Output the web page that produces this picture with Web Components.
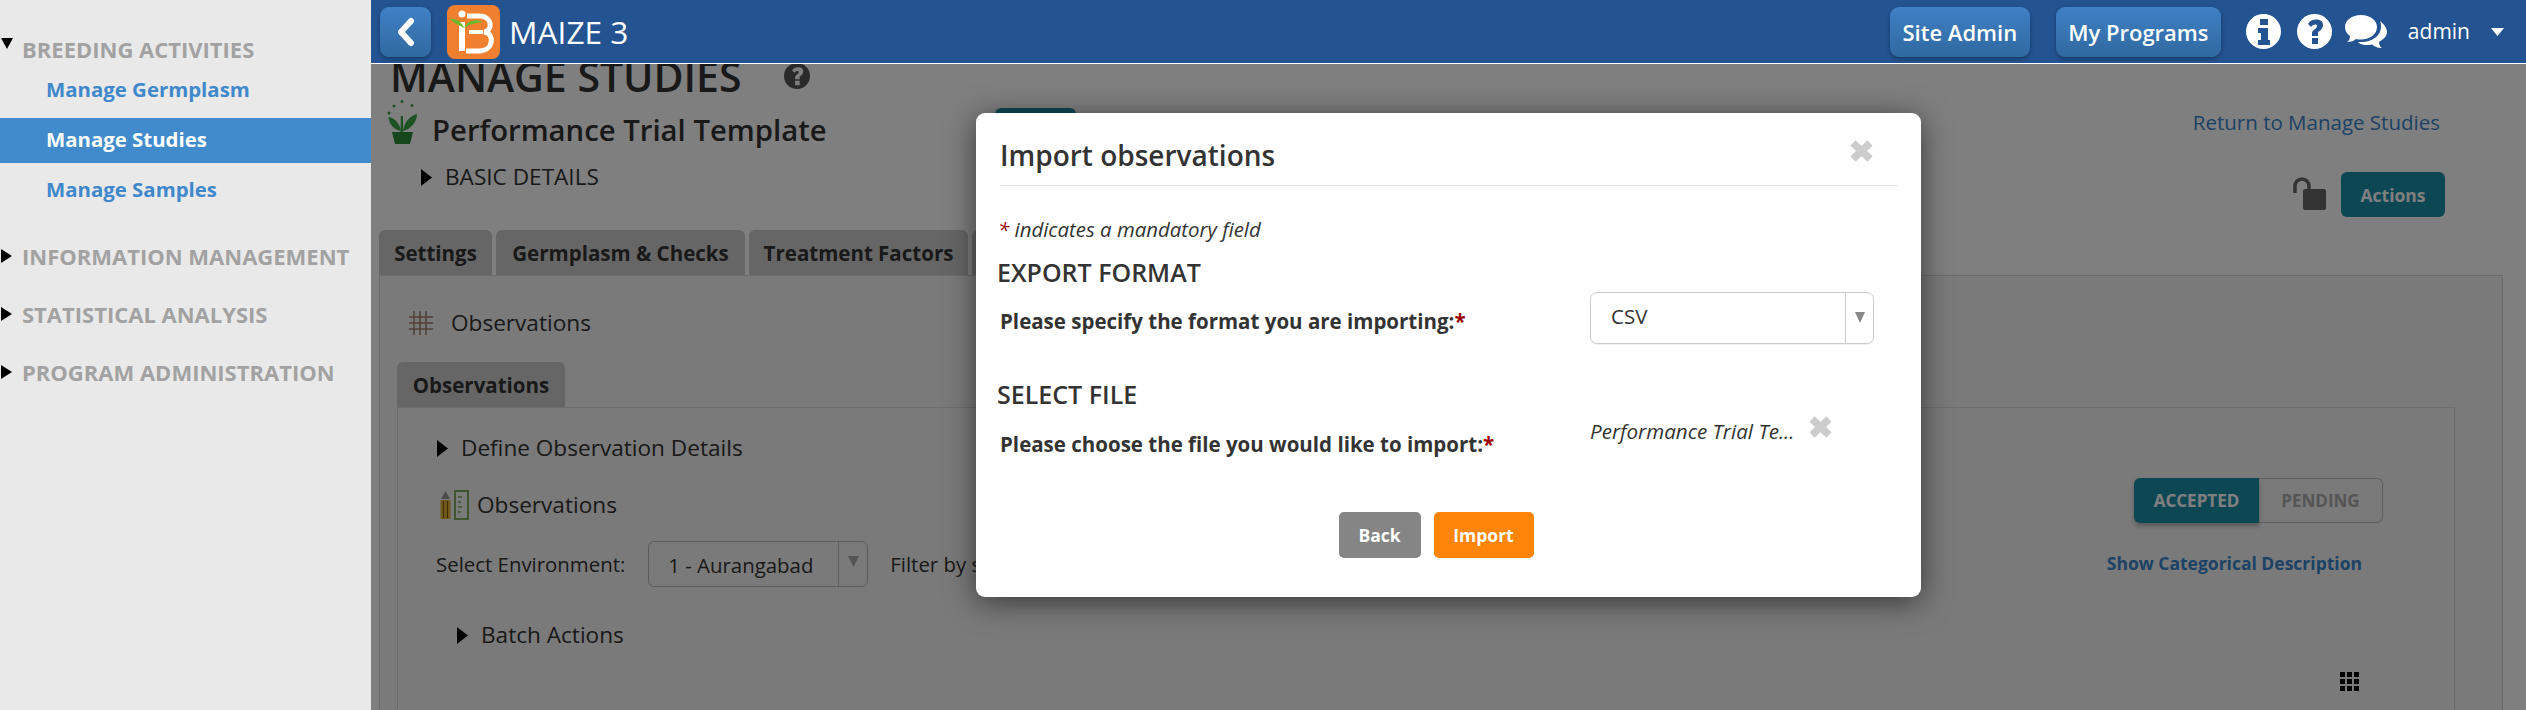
<!DOCTYPE html>
<html>
<head>
<meta charset="utf-8">
<title>Manage Studies</title>
<style>
  html, body { margin: 0; height: 100%; overflow: hidden; }
  body { font-family: "Open Sans", "Liberation Sans", sans-serif; color: #333; }
</style>
</head>
<body>
<app-shell>
  <side-nav slot="nav"></side-nav>
  <top-bar slot="top"></top-bar>
  <study-view slot="main">
    <import-dialog slot="dialog"></import-dialog>
  </study-view>
</app-shell>

<script>
class AppShell extends HTMLElement {
  constructor() {
    super();
    this.attachShadow({ mode: 'open' }).innerHTML = `
      <style>
        :host { display: grid; grid-template-columns: 371px 1fr; grid-template-rows: 64px 646px; width: 2526px; height: 710px; overflow: hidden; }
        .nav { grid-row: 1 / 3; display: block; }
      </style>
      <div class="nav"><slot name="nav"></slot></div>
      <slot name="top"></slot>
      <slot name="main"></slot>
    `;
  }
}

class DisclosureRow extends HTMLElement {
  // small black triangle + label, used all over the page
  constructor() {
    super();
    this.attachShadow({ mode: 'open' }).innerHTML = `
      <style>
        :host { display: flex; align-items: center; gap: 12px; font-size: 22.6px; color: #333; line-height: 28px; }
        svg { width: 13px; height: 19px; flex: none; fill: #000; }
      </style>
      <svg viewBox="0 0 13 19"><path d="M1 1 L12 9.5 L1 18 Z"/></svg>
      <slot></slot>
    `;
  }
}

class NavGroup extends HTMLElement {
  constructor() {
    super();
    const open = this.hasAttribute('open');
    this.attachShadow({ mode: 'open' }).innerHTML = `
      <style>
        :host { display: block; margin-bottom: 28px; }
        .head { display: flex; align-items: center; height: 30px; font-size: 22px; font-weight: 700; color: #a2a2a2; }
        .arrow { width: 22px; flex: none; display: flex; }
        svg { fill: #000; margin-left: 1px; }
        .open svg { margin-top: -10px; }
      </style>
      <div class="head ${open ? 'open' : ''}">
        <span class="arrow">${open
          ? '<svg width="12" height="12" viewBox="0 0 12 12"><path d="M0 0H12L6 11Z"/></svg>'
          : '<svg width="11" height="14" viewBox="0 0 11 14"><path d="M0 0L11 7L0 14Z"/></svg>'}</span>
        <span>${this.getAttribute('label')}</span>
      </div>
      <slot></slot>
    `;
  }
}

class NavLink extends HTMLElement {
  constructor() {
    super();
    this.attachShadow({ mode: 'open' }).innerHTML = `
      <style>
        :host { display: flex; align-items: center; height: 45px; box-sizing: border-box; margin-top: 5px; padding: 0 0 3px 46px; font-size: 20.4px; font-weight: 700; color: #3f88cc; }
        :host([active]) { background: #418bcc; color: #fff; }
        :host(:first-of-type) { margin-top: 4px; }
      </style>
      <slot></slot>
    `;
  }
}

class SideNav extends HTMLElement {
  constructor() {
    super();
    this.attachShadow({ mode: 'open' }).innerHTML = `
      <style>
        :host { display: block; height: 710px; background: #e9e9e9; padding-top: 34px; box-sizing: border-box; }
      </style>
      <nav-group open label="BREEDING ACTIVITIES">
        <div>
          <nav-link>Manage Germplasm</nav-link>
          <nav-link active>Manage Studies</nav-link>
          <nav-link>Manage Samples</nav-link>
        </div>
      </nav-group>
      <nav-group label="INFORMATION MANAGEMENT"></nav-group>
      <nav-group label="STATISTICAL ANALYSIS"></nav-group>
      <nav-group label="PROGRAM ADMINISTRATION"></nav-group>
    `;
  }
}

class BlueButton extends HTMLElement {
  constructor() {
    super();
    this.attachShadow({ mode: 'open' }).innerHTML = `
      <style>
        :host { display: flex; align-items: center; justify-content: center; height: 50px; box-sizing: border-box; border-radius: 9px; color: #fff; font-size: 22px; font-weight: 600;
          background: linear-gradient(#3f80c6, #30699f); box-shadow: 0 2px 4px rgba(0,0,0,.3); }
      </style>
      <slot></slot>
    `;
  }
}

class TopBar extends HTMLElement {
  constructor() {
    super();
    this.attachShadow({ mode: 'open' }).innerHTML = `
      <style>
        :host { display: flex; align-items: center; height: 64px; box-sizing: border-box; background: #235391; border-bottom: 1px solid #fff; padding: 0 21px 0 9px; color: #fff; }
        .back { width: 51px; margin-right: 16px; }
        .logo { width: 53px; height: 54px; flex: none; }
        .name { margin-left: 9px; font-size: 31.7px; line-height: 40px; }
        .right { margin-left: auto; display: flex; align-items: center; }
        .site { width: 140px; margin-right: 26px; }
        .prog { width: 165px; margin-right: 25px; }
        .user { font-size: 21px; margin-left: 21px; margin-right: 21px; line-height: 30px; padding-bottom: 1px; }
        svg { display: block; flex: none; }
      </style>
      <blue-button class="back">
        <svg width="22" height="30" viewBox="0 0 22 30"><path d="M16 4 L6 15 L16 26" fill="none" stroke="#fff" stroke-width="6" stroke-linecap="round" stroke-linejoin="round"/></svg>
      </blue-button>
      <svg class="logo" viewBox="0 0 53 54">
        <rect width="53" height="54" rx="8" fill="#f08030"/>
        <path d="M12 17 H18 V46 H12 Z" fill="#fff"/>
        <path d="M20 11 H32 C46 11 46 26 37 27 C48 28 47 46 32 46 H19" fill="none" stroke="#fff" stroke-width="5"/>
        <path d="M22 27 H36" stroke="#fff" stroke-width="4"/>
        <circle cx="15" cy="9" r="3.5" fill="#fff"/>
        <path d="M3 14 C9 13 15 17 17 23 C13 20 7 19 3 14 Z M17 23 C20 16 28 13 36 17 C29 18 22 19 17 23 Z" fill="#6ab82e"/>
      </svg>
      <span class="name">MAIZE 3</span>
      <div class="right" style="margin-right:1px">
        <blue-button class="site">Site Admin</blue-button>
        <blue-button class="prog">My Programs</blue-button>
        <svg width="35" height="35" viewBox="0 0 35 35" style="margin-right:16px"><path fill="#fff" fill-rule="evenodd" d="M17.5 0a17.5 17.5 0 1 0 0 35a17.5 17.5 0 1 0 0-35Z M14 5h8v6h-8Z M12 14h10v12h2v5H12v-5h3v-7h-3Z"/></svg>
        <svg width="35" height="35" viewBox="0 0 35 35" style="margin-right:13px"><path fill="#fff" fill-rule="evenodd" d="M17.5 0a17.5 17.5 0 1 0 0 35a17.5 17.5 0 1 0 0-35Z M15 24h6v6h-6Z M15 22v-3c0-3 5-4 5-7c0-2-4-2-6 1l-3-3c3-6 15-6 15 1c0 5-5 6-5 8v3Z"/></svg>
        <svg width="42" height="34" viewBox="0 0 42 34"><path fill="#fff" d="M16 0C7 0 0 5 0 12c0 4 2 7 5 9c0 3-1 5-3 6c4 0 7-1 9-3c2 .5 3 .5 5 .5c9 0 16-5.500 16-12.500S25 0 16 0Z"/><path fill="#fff" d="M35 6c1 2 1 4 1 6c0 8-8 15-19 15h-3l-1 .5c3 2 6 2.500 9 2.500c2 0 3 0 5-.5c3 2 5 3.500 10 3.500c-2-1-3-4-3-6c5-3 8-6 8-10c0-4-3-8-7-11Z"/></svg>
        <span class="user">admin</span>
        <svg width="13" height="8" viewBox="0 0 13 8"><path fill="#fff" d="M0 0H13L6.500 8Z"/></svg>
      </div>
    `;
  }
}

class FolderTab extends HTMLElement {
  constructor() {
    super();
    this.attachShadow({ mode: 'open' }).innerHTML = `
      <style>
        :host { display: flex; align-items: center; justify-content: center; height: 45px; box-sizing: border-box; background: #ccc; border-radius: 6px 6px 0 0; font-size: 20.5px; font-weight: 700; color: #333; flex: none; }
      </style>
      <slot></slot>
    `;
  }
}

class TealButton extends HTMLElement {
  constructor() {
    super();
    this.attachShadow({ mode: 'open' }).innerHTML = `
      <style>
        :host { display: flex; align-items: center; justify-content: center; box-sizing: border-box; background: #1c8fa8; border-radius: 6px; color: #fff; font-size: 17.5px; font-weight: 700; flex: none; }
      </style>
      <slot></slot>
    `;
  }
}

class StudyView extends HTMLElement {
  constructor() {
    super();
    this.attachShadow({ mode: 'open' }).innerHTML = `
      <style>
        :host { display: block; position: relative; overflow: hidden; height: 646px; background: #fff; color: #333; }
        svg { display: block; flex: none; }
        .title { display: flex; height: 28px; padding-left: 19px; }
        h1 { margin: -2px 0 0; font-size: 41px; line-height: 28px; font-weight: 600; color: #333; }
        .title svg { margin: 0 0 0 42px; position: relative; top: -1px; }
        .study { display: flex; height: 44px; margin-top: 8px; padding: 0 86px 0 16px; }
        .study svg { margin-right: 15px; }
        .study h2 { margin: 17px 0 0; font-size: 29.3px; line-height: 26px; font-weight: 600; }
        .hidden-btn { width: 81px; height: 40px; margin: 8px 0 0 168px; }
        .return { margin-left: auto; margin-top: 8px; font-size: 20.5px; line-height: 28px; color: #3884cc; }
        .details { display: flex; height: 73px; padding: 0 81px 0 49px; }
        .details disclosure-row { margin-top: 19px; align-self: flex-start; }
        .details svg { margin: 33px 15px 0 auto; }
        .details teal-button { width: 104px; height: 45px; margin-top: 28px; }
        .tabs { display: flex; gap: 4px; margin-top: 13px; padding-left: 8px; }
        .outer { margin: 0 23px 0 8px; height: 400px; border: 1px solid #d8d8d8; border-bottom: 0; background: #f5f5f5; padding: 34px 47px 0 17px; }
        .grid-head { display: flex; align-items: center; gap: 18px; font-size: 22.6px; line-height: 28px; padding-left: 12px; height: 26px; }
        .tabs.inner { margin-top: 26px; padding: 0; }
        .inner-panel { border: 1px solid #d8d8d8; border-bottom: 0; height: 300px; padding: 26px 71px 0 38px; position: relative; display: flex; justify-content: space-between; }
        .obs { display: flex; align-items: center; gap: 8px; font-size: 22.6px; line-height: 28px; margin: 28px 0 0 4px; height: 30px; }
        .filter { display: flex; align-items: center; margin-top: 21px; font-size: 20.4px; color: #333; white-space: nowrap; }
        .pick { display: flex; align-items: center; width: 220px; height: 46px; box-sizing: border-box; border: 1px solid #bbb; border-radius: 6px; margin: 0 22px 0 23px; font-size: 20.4px; padding-left: 19px; padding-top: 2px; }
        .pick .val { flex: 1; }
        .pick .arr { width: 29px; align-self: stretch; margin-top: -2px; border-left: 1px solid #bbb; display: flex; justify-content: center; padding-top: 14px; box-sizing: border-box; }
        .batch { margin: 34px 0 0 20px; }
        .right { display: flex; flex-direction: column; align-items: flex-end; padding-top: 44px; }
        .toggle { display: flex; height: 45px; width: 249px; box-sizing: border-box; font-size: 17px; font-weight: 700; }
        .toggle .on { width: 125px; font-size: 17px; border-radius: 6px 0 0 6px; box-shadow: 0 3px 5px rgba(0,0,0,.3); }
        .toggle .off { flex: 1; display: flex; align-items: center; justify-content: center; border: 1px solid #bbb; border-left: 0; border-radius: 0 6px 6px 0; color: #aaa; }
        .cat { margin-top: 28px; font-size: 17.5px; font-weight: 700; color: #3884cc; line-height: 24px; margin-right: 21px; }
        .dots { margin: 97px 24px 0 0; }
        .backdrop { position: absolute; inset: 0; background: rgba(0,0,0,.5); }
        ::slotted(import-dialog) { position: absolute; left: 605px; top: 49px; }
      </style>
      <div class="title">
        <h1>MANAGE STUDIES</h1>
        <svg width="26" height="26" viewBox="0 0 35 35"><path fill="#555" fill-rule="evenodd" d="M17.500 0a17.500 17.500 0 1 0 0 35a17.500 17.500 0 1 0 0-35Z M15 24h6v6h-6Z M15 22v-3c0-3 5-4 5-7c0-2-4-2-6 1l-3-3c3-6 15-6 15 1c0 5-5 6-5 8v3Z"/></svg>
      </div>
      <div class="study">
        <svg width="30" height="44" viewBox="0 0 30 44">
          <g fill="#3aa544"><circle cx="15" cy="1.500" r="1.500"/><circle cx="7" cy="6" r="1.500"/><circle cx="25" cy="5.500" r="1.500"/><circle cx="2" cy="13" r="1.500"/>
          <path d="M14 31C8 30 2 25 1.500 17C8 18 13 24 14 31Z"/><path d="M16 31C17 23 22 16 30 14C30 22 24 29 16 31Z"/><rect x="13.700" y="16" width="2.300" height="16"/></g>
          <path d="M5 32H26L23 44H8Z" fill="#2c8c38"/>
        </svg>
        <h2>Performance Trial Template</h2>
        <teal-button class="hidden-btn"></teal-button>
        <span class="return">Return to Manage Studies</span>
      </div>
      <div class="details">
        <disclosure-row>BASIC DETAILS</disclosure-row>
        <svg width="33" height="33" viewBox="0 0 33 33"><path d="M2 16V9a7 7 0 0 1 14 0v3" fill="none" stroke="#666" stroke-width="3.500"/><rect x="10" y="12" width="23" height="21" rx="2" fill="#666"/></svg>
        <teal-button>Actions</teal-button>
      </div>
      <div class="tabs">
        <folder-tab style="width:113px">Settings</folder-tab>
        <folder-tab style="width:249px">Germplasm &amp; Checks</folder-tab>
        <folder-tab style="width:219px">Treatment Factors</folder-tab>
        <folder-tab style="width:60px"></folder-tab>
      </div>
      <div class="outer">
        <div class="grid-head">
          <svg width="24" height="24" viewBox="0 0 24 24"><path d="M5 0V24M11 0V24M17 0V24M0 6H24M0 12H24M0 18H24" stroke="#a67c6c" stroke-width="1.500" fill="none"/></svg>
          <span>Observations</span>
        </div>
        <div class="tabs inner"><folder-tab style="width:168px">Observations</folder-tab></div>
        <div class="inner-panel">
          <div class="left">
            <disclosure-row>Define Observation Details</disclosure-row>
            <div class="obs">
              <svg width="29" height="30" viewBox="0 0 29 30">
                <path d="M1 9L5.500 1L10 9Z" fill="#999"/><rect x="0.500" y="10" width="10" height="19" rx="1" fill="#e0b030"/><path d="M3.500 11V28M7.500 11V28" stroke="#7a5a10" stroke-width="1"/>
                <rect x="15" y="1" width="13" height="28" fill="none" stroke="#7cab5c" stroke-width="2"/><path d="M18 7h4M18 12h3M18 17h4M18 22h3" stroke="#7cab5c" stroke-width="1.500"/>
              </svg>
              <span>Observations</span>
            </div>
            <div class="filter">
              <span>Select Environment:</span>
              <div class="pick"><span class="val">1 - Aurangabad</span><span class="arr"><svg width="11" height="11" viewBox="0 0 11 11"><path d="M0 0H11L5.500 11Z" fill="#aaa"/></svg></span></div>
              <span>Filter by s</span>
            </div>
            <disclosure-row class="batch">Batch Actions</disclosure-row>
          </div>
          <div class="right">
            <div class="toggle">
              <teal-button class="on">ACCEPTED</teal-button>
              <span class="off">PENDING</span>
            </div>
            <span class="cat">Show Categorical Description</span>
            <svg class="dots" width="19" height="19" viewBox="0 0 19 19"><path d="M0 0h5v5H0ZM7 0h5v5H7ZM14 0h5v5h-5ZM0 7h5v5H0ZM7 7h5v5H7ZM14 7h5v5h-5ZM0 14h5v5H0ZM7 14h5v5H7ZM14 14h5v5h-5Z" fill="#000"/></svg>
          </div>
        </div>
      </div>
      <div class="backdrop"></div>
      <slot name="dialog"></slot>
    `;
  }
}

class ImportDialog extends HTMLElement {
  constructor() {
    super();
    this.attachShadow({ mode: 'open' }).innerHTML = `
      <style>
        :host { display: block; width: 945px; height: 484px; box-sizing: border-box; background: #fff; border-radius: 9px; box-shadow: 0 5px 30px rgba(0,0,0,.55); color: #333; padding: 0 23px 0 24px; }
        svg { display: block; flex: none; }
        .red { color: #900; }
        header { display: flex; justify-content: space-between; height: 72px; border-bottom: 1px solid #e5e5e5; }
        h3 { margin: 0; font-size: 28px; font-weight: 600; line-height: 32px; padding-top: 26px; }
        header svg { margin: 27px 25px 0 0; }
        .note { margin: 29px 0 0 -2px; font-size: 20.4px; font-style: italic; line-height: 28px; height: 28px; }
        h4 { margin: 0 0 0 -3px; font-size: 25px; font-weight: 600; line-height: 30px; }
        .row { display: grid; grid-template-columns: 590px 284px; font-size: 20.5px; font-weight: 700; line-height: 28px; }
        .pick { display: flex; align-items: center; height: 52px; box-sizing: border-box; border: 1px solid #ccc; border-radius: 7px; font-size: 20.5px; font-weight: 400; padding-left: 20px; box-shadow: 0 1px 1px rgba(0,0,0,.06); }
        .pick span { flex: 1; padding-bottom: 4px; }
        .pick i { width: 28px; align-self: stretch; border-left: 1px solid #ccc; display: flex; justify-content: center; padding-top: 19px; box-sizing: border-box; }
        .file { display: flex; gap: 15px; font-size: 20.6px; font-weight: 400; font-style: italic; line-height: 28px; }
        .actions { display: flex; justify-content: center; gap: 13px; padding-right: 26px; }
        .actions span { display: flex; align-items: center; justify-content: center; height: 46px; border-radius: 5px; color: #fff; font-size: 17.5px; font-weight: 700; }
      </style>
      <header>
        <h3>Import observations</h3>
        <svg width="23" height="22" viewBox="0 0 23 22"><path d="M3 3L20 19M20 3L3 19" stroke="#ccc" stroke-width="7.500"/></svg>
      </header>
      <div class="note"><span class="red">*</span> indicates a mandatory field</div>
      <h4 style="margin-top:14px">EXPORT FORMAT</h4>
      <div class="row" style="margin-top:5px">
        <div style="padding-top:15px">Please specify the format you are importing:<span class="red">*</span></div>
        <div class="pick"><span>CSV</span><i><svg width="10" height="11" viewBox="0 0 10 11"><path d="M0 0H10L5 11Z" fill="#888"/></svg></i></div>
      </div>
      <h4 style="margin-top:35px">SELECT FILE</h4>
      <div class="row" style="margin-top:8px">
        <div style="padding-top:13px">Please choose the file you would like to import:<span class="red">*</span></div>
        <div class="file"><span>Performance Trial Te...</span><svg width="23" height="22" viewBox="0 0 23 22" style="margin-top:-1px"><path d="M3 3L20 19M20 3L3 19" stroke="#ccc" stroke-width="7.500"/></svg></div>
      </div>
      <div class="actions" style="margin-top:54px">
        <span style="width:82px;background:#858585">Back</span>
        <span style="width:100px;background:#ff8509">Import</span>
      </div>
    `;
  }
}

customElements.define('disclosure-row', DisclosureRow);
customElements.define('nav-link', NavLink);
customElements.define('nav-group', NavGroup);
customElements.define('side-nav', SideNav);
customElements.define('blue-button', BlueButton);
customElements.define('top-bar', TopBar);
customElements.define('folder-tab', FolderTab);
customElements.define('teal-button', TealButton);
customElements.define('import-dialog', ImportDialog);
customElements.define('study-view', StudyView);
customElements.define('app-shell', AppShell);
</script>
</body>
</html>
